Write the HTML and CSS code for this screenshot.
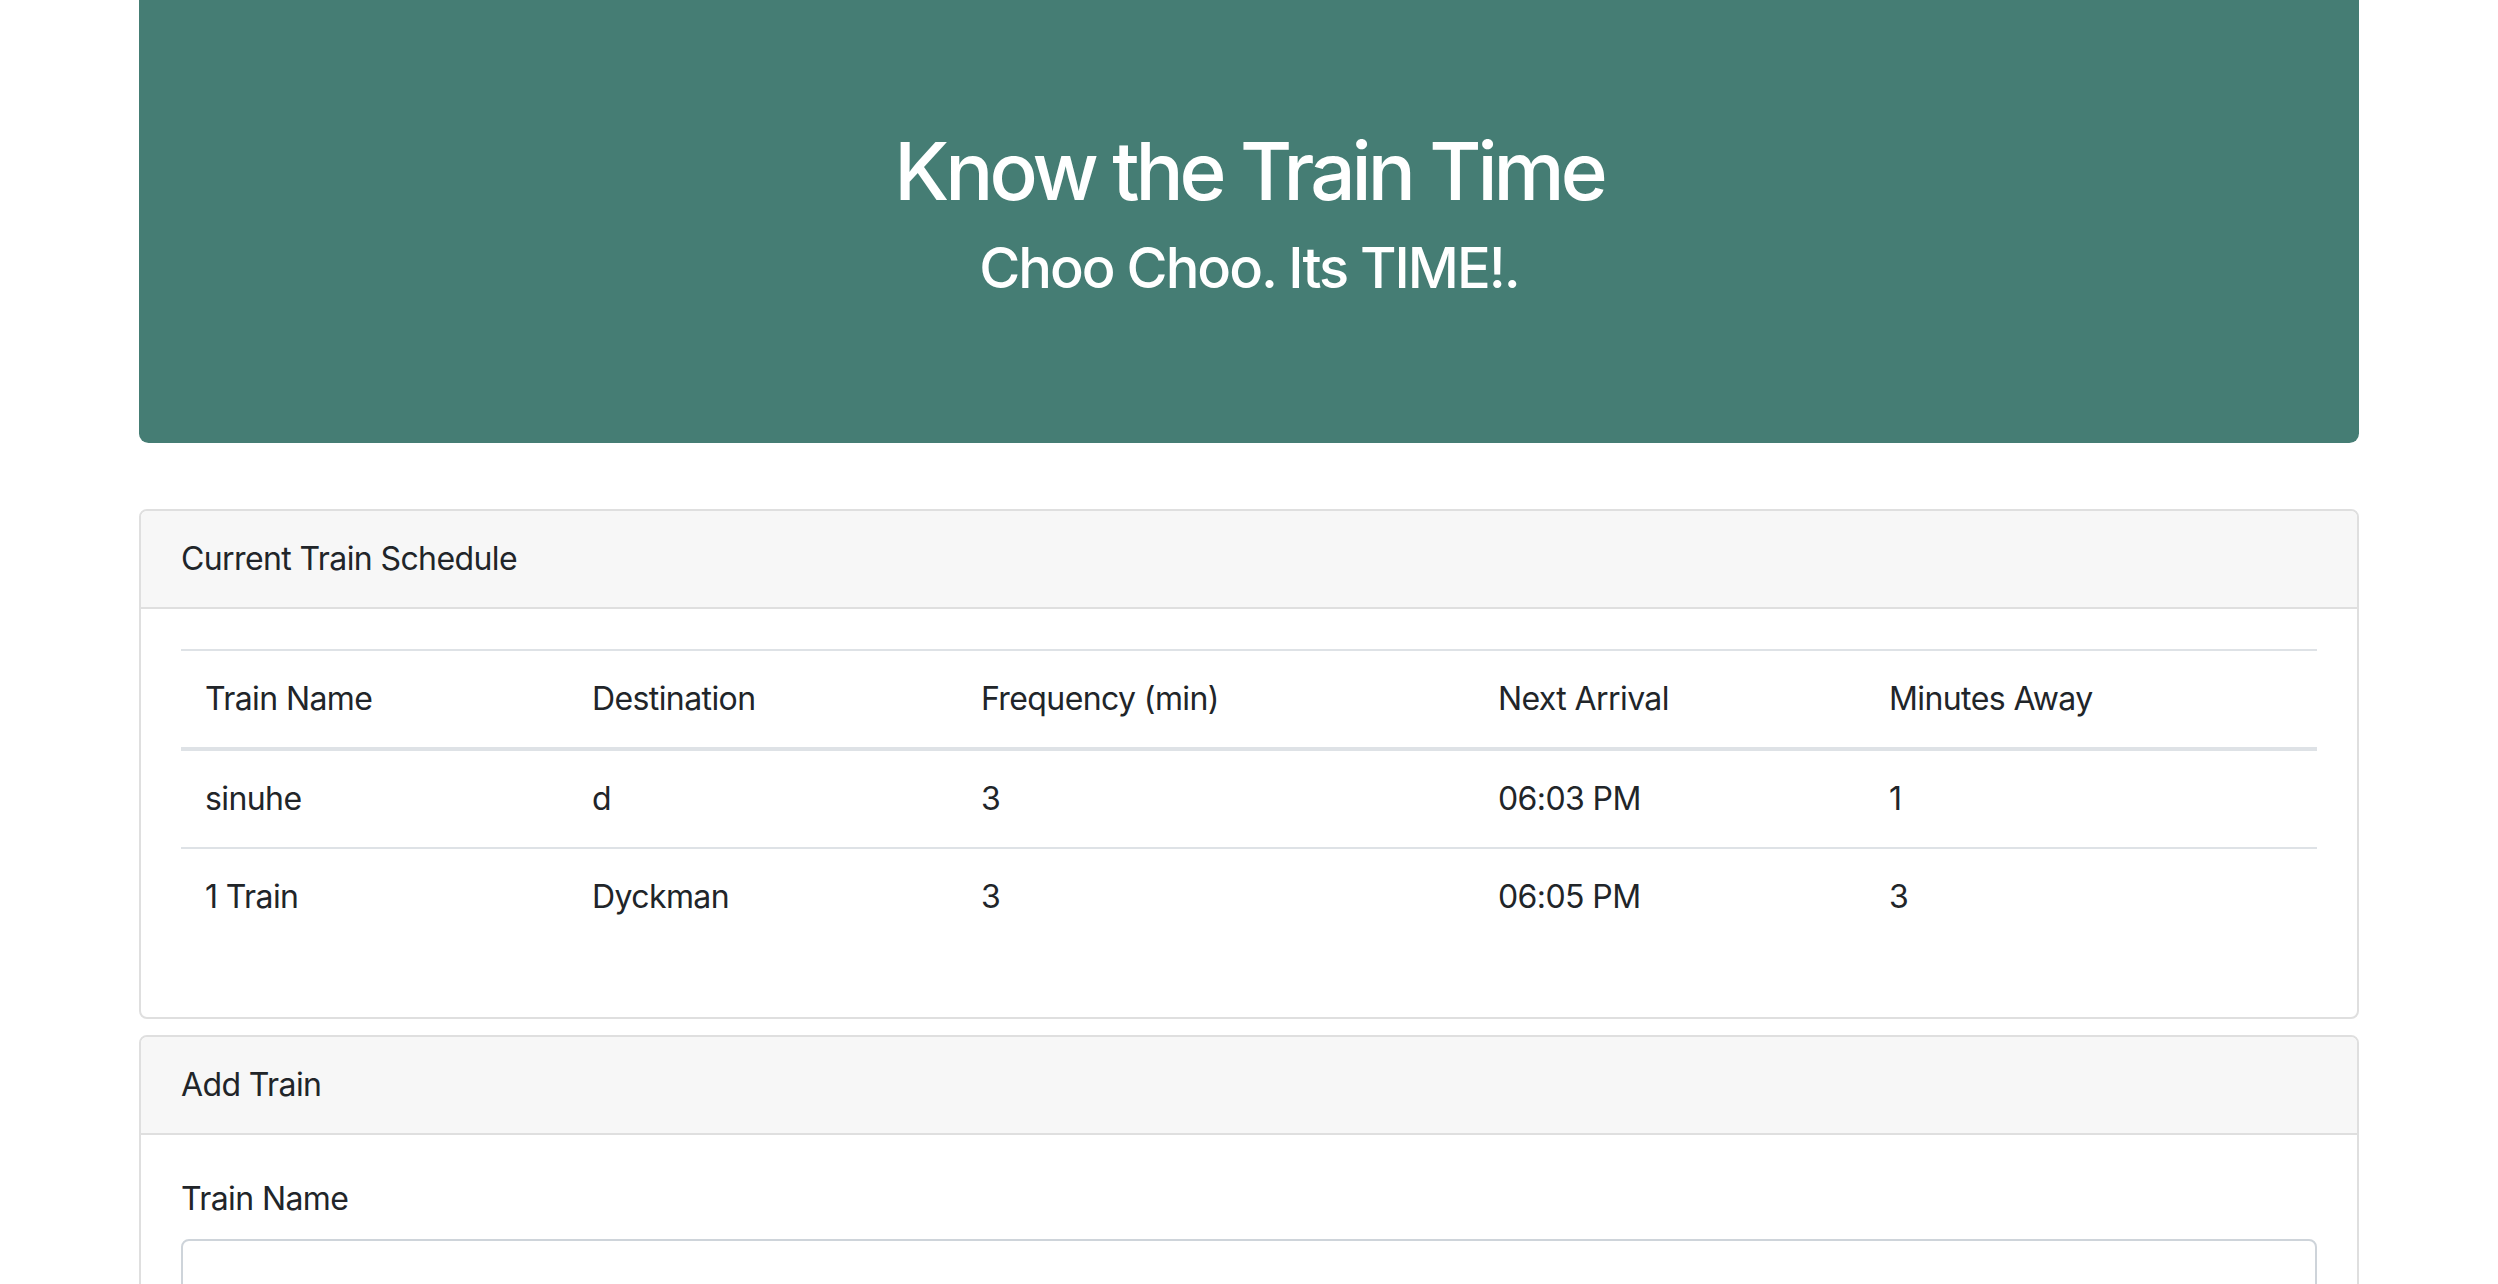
FILE: index.html
```html
<!DOCTYPE html>
<html lang="en">
<head>
<meta charset="utf-8">
<title>Train Scheduler</title>
<link rel="stylesheet" href="styles.css">
</head>
<body>
<div class="container">
  <div class="jumbotron">
    <h1 class="title">Know the Train Time</h1>
    <h3 class="subtitle">Choo Choo. Its TIME!.</h3>
  </div>

  <div class="card">
    <div class="card-header">Current Train Schedule</div>
    <div class="card-body">
      <table class="table">
        <thead>
          <tr>
            <th class="c1">Train Name</th>
            <th class="c2">Destination</th>
            <th class="c3">Frequency (min)</th>
            <th class="c4">Next Arrival</th>
            <th class="c5">Minutes Away</th>
          </tr>
        </thead>
        <tbody>
          <tr>
            <td>sinuhe</td>
            <td>d</td>
            <td>3</td>
            <td>06:03 PM</td>
            <td>1</td>
          </tr>
          <tr>
            <td>1 Train</td>
            <td>Dyckman</td>
            <td>3</td>
            <td>06:05 PM</td>
            <td>3</td>
          </tr>
        </tbody>
      </table>
    </div>
  </div>

  <div class="card card-gap">
    <div class="card-header">Add Train</div>
    <div class="card-body">
      <form class="form">
        <div class="form-group">
          <label class="label" for="train-name">Train Name</label>
          <input class="input" id="train-name" type="text">
        </div>
      </form>
    </div>
  </div>
</div>
</body>
</html>
```

FILE: styles.css
```css
* { box-sizing: border-box; }

html, body {
  margin: 0;
  padding: 0;
  background: #ffffff;
}

body {
  font-family: Inter, "Noto Sans", "Liberation Sans", sans-serif;
  font-size: 32px;
  line-height: 48px;
  letter-spacing: -0.6px;
  color: #212529;
}

.container {
  width: 2280px;
  margin: 0 auto;
  padding: 0 30px;
}

.jumbotron {
  background: #457d74;
  color: #ffffff;
  border-radius: 0 0 9.6px 9.6px;
  padding: 123px 64px 125px;
  margin-bottom: 66px;
  text-align: center;
}

.title {
  margin: 0 0 16px;
  font-size: 80px;
  line-height: 96px;
  font-weight: 500;
  letter-spacing: -4px;
}

.subtitle {
  margin: 0 0 16px;
  font-size: 56px;
  line-height: 67px;
  font-weight: 500;
  letter-spacing: -2px;
}

.card {
  border: 2px solid #dfdfdf;
  border-radius: 8px;
  overflow: hidden;
}

.card-gap {
  margin-top: 16px;
}

.card-header {
  background: #f7f7f7;
  border-bottom: 2px solid #dfdfdf;
  padding: 24px 40px;
}

.card-body {
  padding: 40px;
}

.table {
  width: 100%;
  border-collapse: collapse;
  margin-bottom: 32px;
}

.table th,
.table td {
  text-align: left;
  font-weight: 400;
  padding: 24px;
  border-top: 2px solid #dee2e6;
  vertical-align: top;
}

.table thead th {
  border-bottom: 4px solid #dee2e6;
}

.c1 { width: 387px; }
.c2 { width: 389px; }
.c3 { width: 517px; }
.c4 { width: 391px; }

.form-group {
  margin-bottom: 32px;
}

.label {
  display: block;
  margin-bottom: 16px;
}

.input {
  display: block;
  width: 100%;
  height: 76px;
  border: 2px solid #ced4da;
  border-radius: 8px;
  padding: 12px 24px;
  font: inherit;
  color: #495057;
}
```
